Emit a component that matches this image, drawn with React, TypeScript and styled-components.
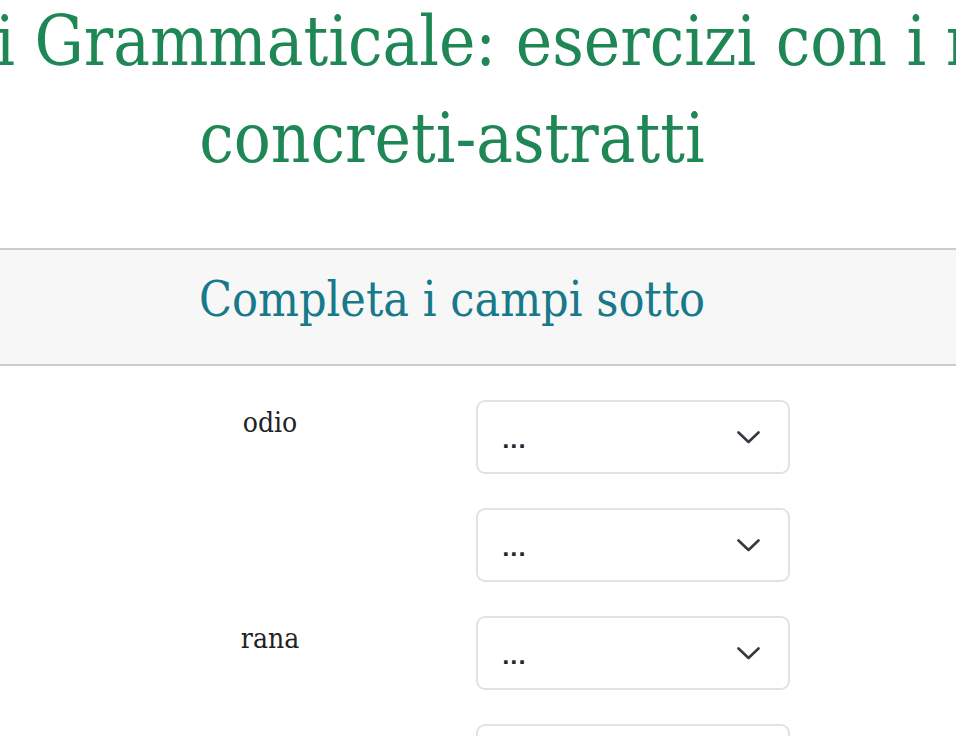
import React from 'react';
import styled, { createGlobalStyle } from 'styled-components';

// Styles

const GlobalStyle = createGlobalStyle`
    html, body {
        margin: 0;
        padding: 0;
        background: #ffffff;
        overflow: hidden;
    }
    * {
        box-sizing: border-box;
    }
`
const Page = styled.div`
    display: flex;
    flex-direction: column;
    width: 956px;
    font-family: "DejaVu Serif Condensed", "DejaVu Serif", serif;
`
const TitleBlock = styled.h1`
    display: flex;
    flex-direction: column;
    align-items: center;
    width: 904px;
    margin: -7px 0 0;
    font-weight: normal;
    font-size: 68.5px;
    line-height: 97px;
    color: #1e8755;
    white-space: nowrap;
`
const TitleLine = styled.span`
    display: block;
`
const Band = styled.div`
    display: flex;
    align-items: center;
    justify-content: center;
    height: 118px;
    margin-top: 61px;
    padding: 0 52px 16px 0;
    background: #f7f7f7;
    border-top: 2px solid #cccccc;
    border-bottom: 2px solid #cccccc;
`
const BandTitle = styled.h2`
    margin: 0;
    font-weight: normal;
    font-size: 48px;
    color: #17798a;
`
const FieldList = styled.div`
    display: flex;
    flex-direction: column;
    gap: 34px;
    padding: 34px 0 0 64px;
`
const FieldRow = styled.div`
    display: grid;
    grid-template-columns: 412px 314px;
    align-items: start;
`
const FieldLabel = styled.label`
    padding-top: 6px;
    text-align: center;
    font-size: 28px;
    line-height: 33px;
    color: #222222;
`
const SelectWrap = styled.div`
    position: relative;
`
const Select = styled.select`
    appearance: none;
    display: block;
    width: 100%;
    height: 74px;
    padding: 8px 60px 0 24px;
    border: 2px solid #dfe2e6;
    border-radius: 9px;
    background: #ffffff;
    font-family: "DejaVu Sans", sans-serif;
    font-size: 20px;
    font-weight: 700;
    letter-spacing: 0.5px;
    color: #212529;
    outline: none;
`
const Chevron = styled.svg`
    position: absolute;
    top: 31px;
    right: 30px;
    pointer-events: none;
`

const fields = ['odio', '', 'rana', ''];

const App = () => {
    return (
        <Page>
            <GlobalStyle />
            <TitleBlock>
                <TitleLine>Analisi Grammaticale: esercizi con i nomi</TitleLine>
                <TitleLine>concreti-astratti</TitleLine>
            </TitleBlock>

            <Band>
                <BandTitle>Completa i campi sotto</BandTitle>
            </Band>

            <FieldList>
                {fields.map((label, i) => (
                    <FieldRow key={i}>
                        <FieldLabel htmlFor={`campo-${i}`}>{label}</FieldLabel>
                        <SelectWrap>
                            <Select id={`campo-${i}`} defaultValue="">
                                <option value="">...</option>
                                <option value="concreto">concreto</option>
                                <option value="astratto">astratto</option>
                            </Select>
                            <Chevron width="23" height="13" viewBox="0 0 23 13">
                                <polyline
                                    points="1.5,1.5 11.5,11 21.5,1.5"
                                    fill="none"
                                    stroke="#343a40"
                                    strokeWidth="2.6"
                                    strokeLinecap="round"
                                    strokeLinejoin="round"
                                />
                            </Chevron>
                        </SelectWrap>
                    </FieldRow>
                ))}
            </FieldList>
        </Page>
    );
};

export default App;
